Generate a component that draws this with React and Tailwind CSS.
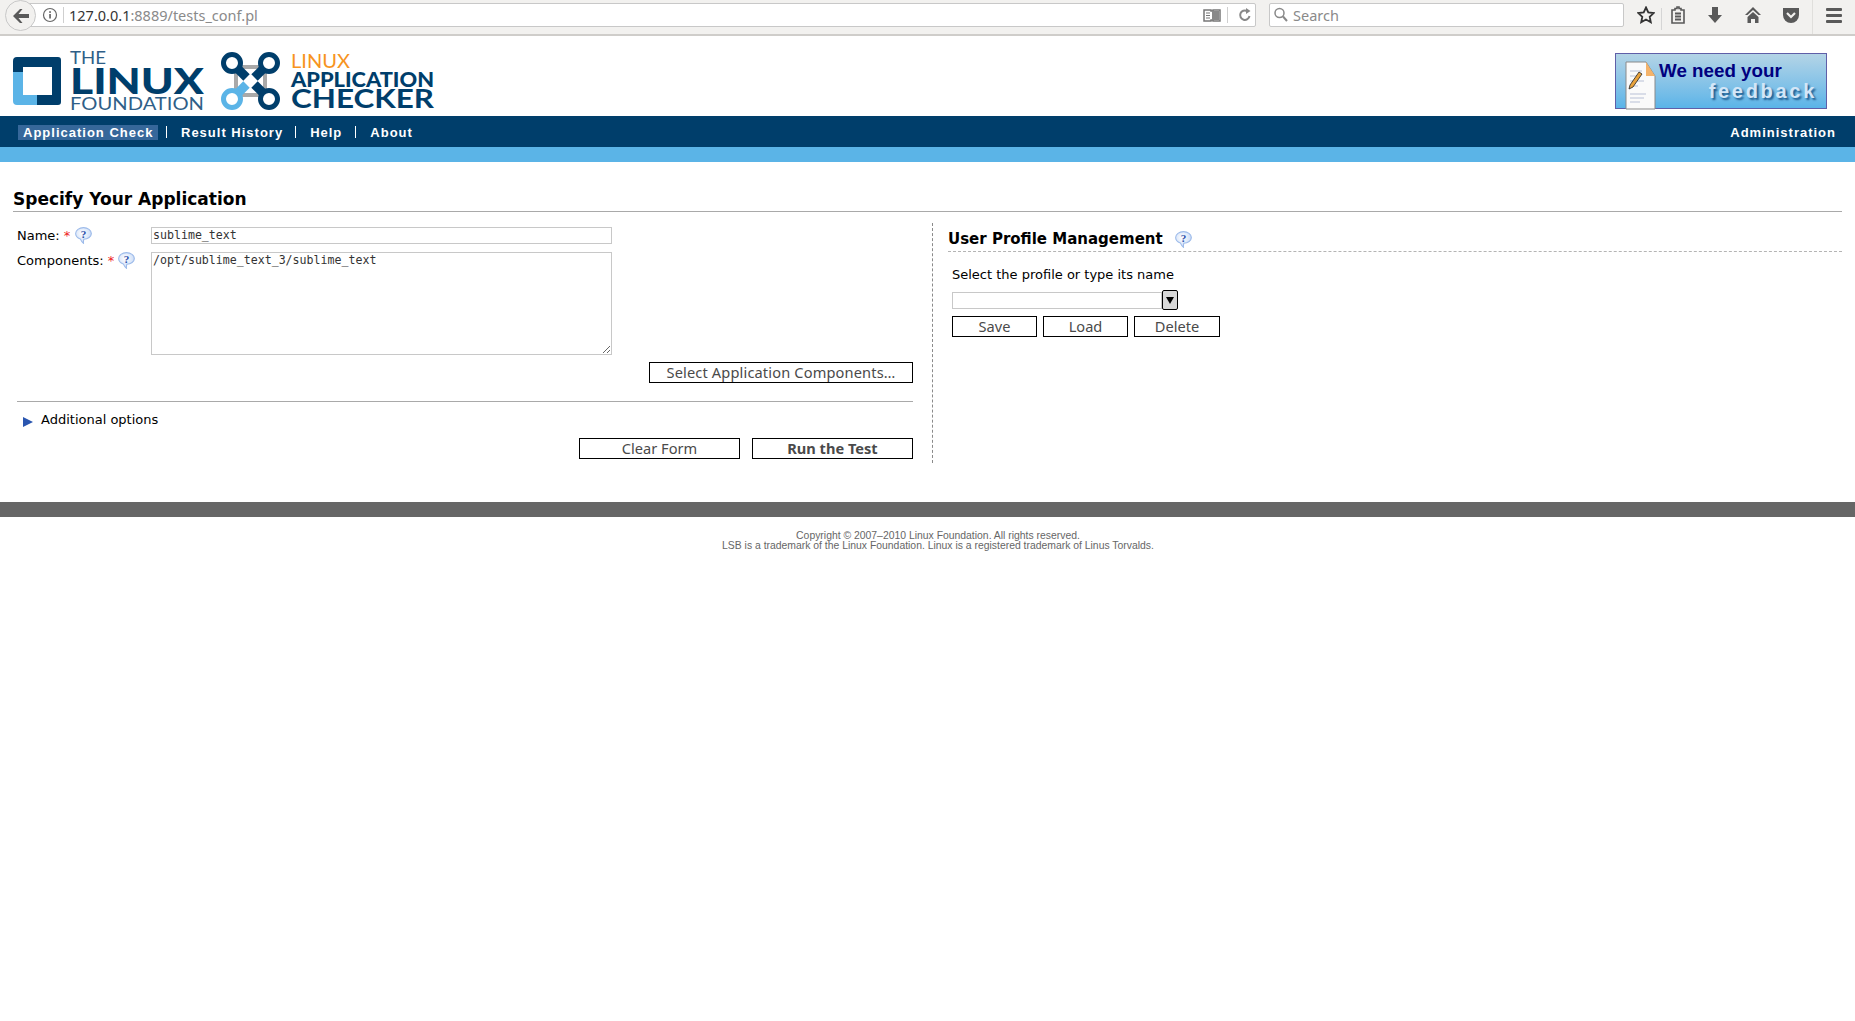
import React from "react";

function Help({ className = "" }) {
  return (
    <svg viewBox="0 0 16 16" className={"w-[17px] h-[17px] shrink-0 " + className}>
      <defs>
        <radialGradient id="hb" cx="42%" cy="38%" r="70%">
          <stop offset="0%" stopColor="#ffffff" />
          <stop offset="70%" stopColor="#d4e2f8" />
          <stop offset="100%" stopColor="#8fb0e6" />
        </radialGradient>
      </defs>
      <path d="M8 .6C3.900.6.600 3 .600 6.200c0 2.400 1.700 4.200 4.400 5 .6 1.400 1.700 3.200 3 4.200-.1-1.200 0-2.700.3-3.900 3.900-.2 7.100-2.400 7.100-5.400C15.400 3 12 .6 8 .6z" fill="url(#hb)" stroke="#9dbbea" strokeWidth="1" />
      <text x="8" y="10" textAnchor="middle" fontSize="10.500" fontWeight="700" fontFamily="Liberation Serif, serif" fill="#2b4fa8">?</text>
    </svg>
  );
}

function Star() {
  return <span className="text-[#ee2222] ml-[4px] mr-[4px]">*</span>;
}

function Btn({ className = "", bold = false, children }) {
  return (
    <button className={"border border-black bg-white h-[21px] text-[#4a4a4a] text-[14.600px] leading-[19px] text-center font-['Noto_Sans',sans-serif] " + (bold ? "font-bold " : "") + className}>
      {children}
    </button>
  );
}

function Logo() {
  const d = "#003e6b";
  const l = "#5bb4e7";
  return (
    <svg width="425" height="80" viewBox="13 36 425 80" className="block">
      {/* LF mark */}
      <path d="M17 57h41a3 3 0 0 1 3 3v42a3 3 0 0 1-3 3H37V95h15V67H23v5H13V61a4 4 0 0 1 4-4z" fill={d} />
      <path d="M13 72h10v23h14v10H17a4 4 0 0 1-4-4z" fill={l} />
      <text x="70" y="64" fontFamily="Lato, sans-serif" fontWeight="400" fontSize="17" fill="#2f5f88" textLength="36" lengthAdjust="spacingAndGlyphs">THE</text>
      <text x="70" y="94" fontFamily="Lato, sans-serif" fontWeight="900" fontSize="36" fill={d} textLength="134" lengthAdjust="spacingAndGlyphs">LINUX</text>
      <text x="70" y="110" fontFamily="Lato, sans-serif" fontWeight="400" fontSize="17" fill="#2f5f88" textLength="134" lengthAdjust="spacingAndGlyphs">FOUNDATION</text>
      {/* Checker mark */}
      <rect x="236" y="67" width="29" height="28" rx="4" fill="none" stroke="#a9a9a9" strokeWidth="4" />
      <g fill="none">
        <path d="M235 66L246.500 77.500" stroke={d} strokeWidth="9" />
        <path d="M266 66L254.500 77.500" stroke={d} strokeWidth="9" />
        <path d="M266 96L254.500 84.500" stroke={d} strokeWidth="9" />
        <path d="M235 96L246.500 84.500" stroke={l} strokeWidth="9" />
      </g>
      <g fill="#fff" strokeWidth="5">
        <circle cx="232" cy="63" r="8.500" stroke={d} />
        <circle cx="269" cy="63" r="8.500" stroke={d} />
        <circle cx="269" cy="99" r="8.500" stroke={d} />
        <circle cx="232" cy="99" r="8.500" stroke={l} />
      </g>
      <text x="291" y="68" fontFamily="Lato, sans-serif" fontWeight="400" fontSize="19" fill="#f7941e" textLength="59" lengthAdjust="spacingAndGlyphs">LINUX</text>
      <text x="291" y="87" fontFamily="Lato, sans-serif" fontWeight="900" fontSize="20" fill={d} textLength="143" lengthAdjust="spacingAndGlyphs">APPLICATION</text>
      <text x="291" y="108" fontFamily="Lato, sans-serif" fontWeight="700" fontSize="26" fill={d} textLength="143" lengthAdjust="spacingAndGlyphs">CHECKER</text>
    </svg>
  );
}

function Feedback() {
  return (
    <div className="w-[212px] h-[56px] border border-[#5f5fa8] bg-gradient-to-b from-[#b3d4e6] to-[#5ab4e8] flex">
      <svg width="32" height="50" viewBox="0 0 32 50" className="ml-[9px] mt-[7px] shrink-0">
        <path d="M1 1h20l9 14v33H1z" fill="#fafafa" stroke="#8a8a8a" />
        <path d="M21 1l9 14h-9z" fill="#f4b36a" />
        <path d="M5 10h12M5 15h10M5 20h14M5 25h8M5 33h16M5 37h14M5 41h10" stroke="#b8bfd6" strokeWidth="1.200" />
        <path d="M5 24l9-13 3 2-9 13-4 2z" fill="#e8a23c" stroke="#222" strokeWidth="0.800" />
      </svg>
      <div className="flex-1 pl-[2px] pr-[9px] font-['Liberation_Sans',sans-serif] font-bold">
        <div className="text-[#00007f] text-[18.800px] leading-[20px] mt-[7px]">We need your</div>
        <div className="text-[#d3e6f7] text-[20px] leading-[22px] tracking-[2.700px] text-right -mt-[1px] [text-shadow:2px_2px_2px_#1c5a8e]">feedback</div>
      </div>
    </div>
  );
}

function Toolbar() {
  const c = "#595959";
  return (
    <div className="h-[36px] bg-[#f2f1ef] border-b-2 border-[#cfcdca] flex items-start relative">
      <div className="ml-[26px] mt-[3px] w-[1230px] h-[24px] bg-white border border-[#c8c8c8] rounded-r-[2px] flex items-center">
        <svg width="16" height="16" viewBox="0 0 16 16" className="ml-[15px]">
          <circle cx="8" cy="8" r="6.500" fill="none" stroke="#666" strokeWidth="1.200" />
          <rect x="7.200" y="7" width="1.700" height="4.500" fill="#666" />
          <rect x="7.200" y="4.200" width="1.700" height="1.700" fill="#666" />
        </svg>
        <div className="w-px h-[16px] bg-[#cfcfcf] ml-[5px]" />
        <div className="ml-[5px] text-[14.500px] text-[#8a8a8a] font-['Noto_Sans',sans-serif] leading-[22px]">
          <span className="text-[#333]">127.0.0.1</span>:8889/tests_conf.pl
        </div>
        <div className="ml-auto flex items-center">
          <svg width="18" height="16" viewBox="0 0 18 16" className="mr-[6px]">
            <path d="M1 3h7v1h2V3h7v11h-7v-1H8v1H1z" fill="#fff" stroke="#777" strokeWidth="1.500" />
            <path d="M3 6h4M3 8.500h4M3 11h4" stroke="#777" strokeWidth="1.200" />
            <rect x="9" y="4" width="7" height="9" fill="#888" />
          </svg>
          <div className="w-px h-[16px] bg-[#cfcfcf] mr-[10px]" />
          <svg width="14" height="14" viewBox="0 0 14 14" className="mr-[3px]">
            <path d="M11.500 8A4.700 4.700 0 1 1 9 3" fill="none" stroke="#888" strokeWidth="2" />
            <path d="M8 0l4.500 3L8 6z" fill="#888" />
          </svg>
        </div>
      </div>
      <div className="absolute left-[5px] top-[0px] w-[31px] h-[31px] rounded-full bg-[#f2f1ef] border border-[#c8c8c8] flex items-center justify-center">
        <svg width="18" height="16" viewBox="0 0 18 16">
          <path d="M8 1L1 8l7 7h2.500L6.500 10H17V6H6.500L10.500 1z" fill={c} />
        </svg>
      </div>
      <div className="ml-[13px] mt-[3px] w-[355px] h-[24px] bg-white border border-[#c8c8c8] rounded-[2px] flex items-center">
        <svg width="16" height="16" viewBox="0 0 16 16" className="ml-[3px]">
          <circle cx="6.500" cy="6" r="4.500" fill="none" stroke="#888" strokeWidth="1.500" />
          <path d="M10 9.500l4 4.500" stroke="#888" strokeWidth="2" />
        </svg>
        <span className="ml-[4px] mt-[1px] text-[14.500px] text-[#8a8a8a] font-['Noto_Sans',sans-serif]">Search</span>
      </div>
      <svg width="18" height="18" viewBox="0 0 18 18" className="ml-[13px] mt-[6px]">
        <path d="M9 1.500l2.300 5 5.400.6-4 3.700 1.100 5.400L9 13.500l-4.800 2.700 1.100-5.400-4-3.700 5.400-.6z" fill="none" stroke="#333" strokeWidth="1.800" />
      </svg>
      <div className="w-px h-[22px] bg-[#d5d5d5] ml-[6px] mt-[8px]" />
      <svg width="14" height="18" viewBox="0 0 14 18" className="ml-[9px] mt-[6px]">
        <path d="M1 4h3V2.500h2V1h2v1.500h2V4h3v13H1z" fill="none" stroke={c} strokeWidth="1.600" />
        <path d="M4 7.500h6M4 10.500h6M4 13.500h6" stroke={c} strokeWidth="1.800" />
      </svg>
      <svg width="16" height="18" viewBox="0 0 16 18" className="ml-[22px] mt-[6px]">
        <path d="M5 1h6v8h4l-7 8-7-8h4z" fill={c} />
      </svg>
      <svg width="18" height="18" viewBox="0 0 18 18" className="ml-[21px] mt-[6px]">
        <path d="M9 1L1 9h2.500L9 4l5.500 5H17z" fill={c} />
        <path d="M3.500 11L9 6l5.500 5v6H11v-4H7v4H3.500z" fill={c} />
      </svg>
      <svg width="18" height="18" viewBox="0 0 18 18" className="ml-[20px] mt-[6px]">
        <path d="M1 2h16v7a8 8 0 0 1-16 0z" fill={c} />
        <path d="M5 7l4 4 4-4" fill="none" stroke="#f2f1ef" strokeWidth="2.200" />
      </svg>
      <div className="w-px h-[34px] bg-[#e0dfdc] ml-[12px]" />
      <svg width="16" height="16" viewBox="0 0 16 16" className="ml-[13px] mt-[7px]">
        <rect x="0" y="1" width="16" height="3" rx="1" fill={c} />
        <rect x="0" y="7" width="16" height="3" rx="1" fill={c} />
        <rect x="0" y="13" width="16" height="3" rx="1" fill={c} />
      </svg>
    </div>
  );
}

function Sep() {
  return <span className="w-[1px] h-[12px] bg-white block" />;
}

export default function App() {
  return (
    <div className="min-h-[1021px] bg-white font-['DejaVu_Sans',sans-serif] text-[13px] text-black overflow-hidden">
      <Toolbar />
      <header className="h-[80px] flex items-start justify-between pl-[13px] pr-[28px]">
        <Logo />
        <div className="mt-[17px]"><Feedback /></div>
      </header>
      <nav className="h-[31px] bg-[#003e6b] flex items-center pl-[18px] pr-[19px] pt-[1px] font-['Liberation_Sans',sans-serif] font-bold text-[13px] leading-[15px] tracking-[1px] text-white">
        <span className="bg-[#36679a] h-[15px] w-[140px] pl-[5px] whitespace-nowrap">Application Check</span>
        <span className="ml-[8px]"><Sep /></span>
        <span className="ml-[14px]">Result History</span>
        <span className="ml-[12px]"><Sep /></span>
        <span className="ml-[14px]">Help</span>
        <span className="ml-[13px]"><Sep /></span>
        <span className="ml-[14px]">About</span>
        <span className="ml-auto">Administration</span>
      </nav>
      <div className="h-[15px] bg-[#5bb4e7]" />
      <main className="pl-[13px] pr-[13px]">
        <h1 className="mt-[25px] h-[24px] leading-[25px] text-[17px] font-bold border-b border-[#a9a9a9] box-content">Specify Your Application</h1>
        <div className="flex mt-[11px]">
          <section className="w-[920px] h-[240px] border-r border-dashed border-[#8a8a8a] pl-[4px] pr-[19px] pt-[4px] shrink-0">
            <div className="flex h-[17px] items-center">
              <label className="w-[134px] flex items-center">Name:<Star /><Help className="ml-[1px]" /></label>
              <input readOnly value="sublime_text" className="w-[461px] h-[17px] border border-[#c8c8c8] bg-white px-[1px] font-['DejaVu_Sans_Mono',monospace] text-[11.600px] text-[#333] outline-none" />
            </div>
            <div className="flex mt-[8px] items-start">
              <label className="w-[134px] flex items-center h-[17px]">Components:<Star /><Help /></label>
              <textarea readOnly value="/opt/sublime_text_3/sublime_text" className="w-[461px] h-[103px] border border-[#c8c8c8] bg-white px-[1px] py-0 leading-[14px] font-['DejaVu_Sans_Mono',monospace] text-[11.600px] text-[#333] outline-none block" />
            </div>
            <div className="flex justify-end mt-[7px]">
              <Btn className="w-[264px] tracking-[0.150px]">Select Application Components…</Btn>
            </div>
            <div className="border-t border-[#a9a9a9] mt-[18px]" />
            <div className="flex items-center mt-[9px] h-[18px]">
              <svg width="12" height="12" viewBox="0 0 12 12" className="ml-[5px] mt-[3px]">
                <path d="M1 1l10 5-10 5z" fill="#2a56b0" />
              </svg>
              <span className="ml-[7px]">Additional options</span>
            </div>
            <div className="flex justify-end gap-[12px] mt-[9px]">
              <Btn className="w-[161px]">Clear Form</Btn>
              <Btn className="w-[161px]" bold>Run the Test</Btn>
            </div>
          </section>
          <section className="flex-1 pl-[15px]">
            <div className="h-[29px] border-b border-dashed border-[#b4b4b4] flex items-center pt-[5px]">
              <span className="text-[15px] font-bold">User Profile Management</span>
              <Help className="ml-[12px]" />
            </div>
            <div className="pl-[4px]">
              <div className="mt-[15px] leading-[16px]">Select the profile or type its name</div>
              <div className="flex items-center mt-[7px] h-[20px]">
                <div className="w-[210px] h-[17px] border border-[#c8c8c8] bg-white" />
                <div className="w-[16px] h-[20px] bg-[#d8d8d8] border border-black rounded-[2px] flex items-center justify-center">
                  <svg width="10" height="10" viewBox="0 0 10 10"><path d="M1 2h8L5 9z" fill="#000" /></svg>
                </div>
              </div>
              <div className="flex gap-[6px] mt-[6px]">
                <Btn className="w-[85px]">Save</Btn>
                <Btn className="w-[85px]">Load</Btn>
                <Btn className="w-[86px]">Delete</Btn>
              </div>
            </div>
          </section>
        </div>
      </main>
      <div className="h-[15px] bg-[#666666] mt-[39px]" />
      <footer className="mt-[14px] pl-[21px] text-center font-['Liberation_Sans',sans-serif] text-[10.400px] leading-[10px] text-[#666]">
        <div>Copyright © 2007–2010 Linux Foundation. All rights reserved.</div>
        <div>LSB is a trademark of the Linux Foundation. Linux is a registered trademark of Linus Torvalds.</div>
      </footer>
    </div>
  );
}
